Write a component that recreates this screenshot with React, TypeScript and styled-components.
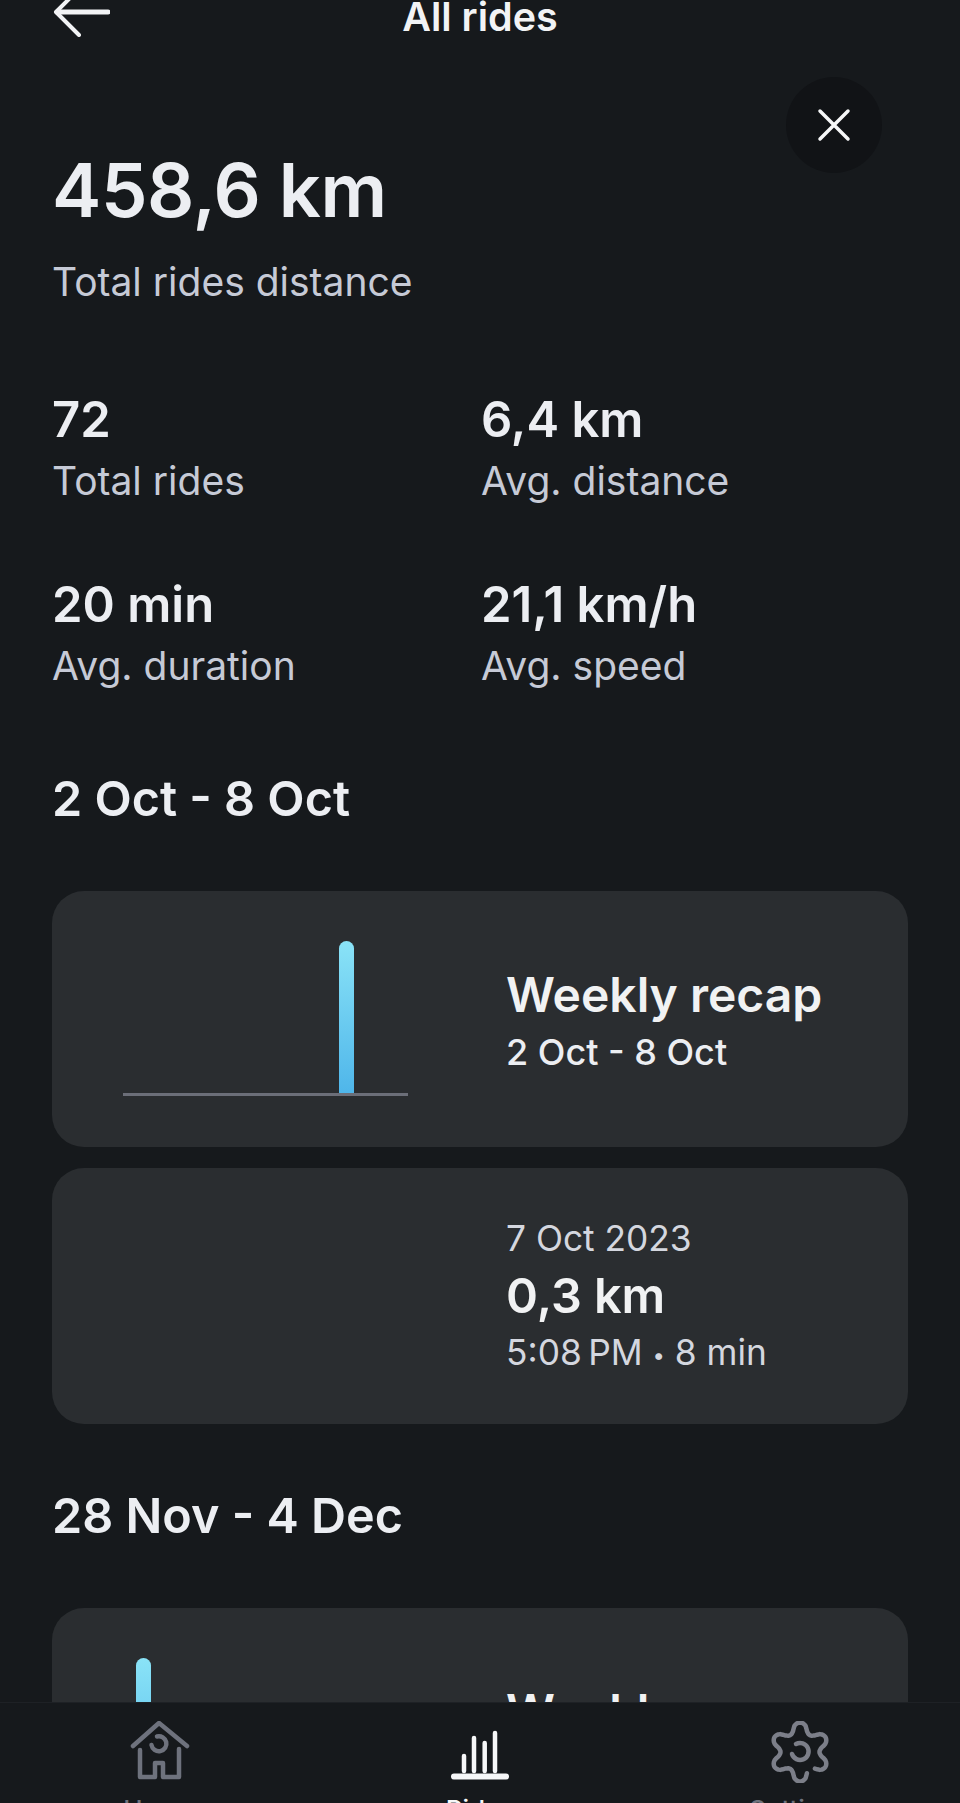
import React from "react";
import styled, { createGlobalStyle } from "styled-components";

const GlobalStyle = createGlobalStyle`
  html, body {
    margin: 0;
    padding: 0;
    background: #16191c;
    overflow: hidden;
  }
  * {
    box-sizing: border-box;
  }
`;

const Screen = styled.div`
  position: relative;
  width: 960px;
  height: 1803px;
  display: flex;
  flex-direction: column;
  overflow: hidden;
  background: #16191c;
  font-family: Inter, "Liberation Sans", sans-serif;
  color: #eceef2;
`;

const Scroll = styled.main`
  flex: 1;
  min-height: 0;
  overflow: hidden;
  padding: 0 52px;
`;

const Header = styled.header`
  height: 37px;
  display: flex;
  align-items: flex-start;
  justify-content: center;
  position: relative;
`;

const BackIcon = styled.svg`
  position: absolute;
  left: 0;
  bottom: 0;
`;

const Title = styled.h1`
  margin: -5px 0 0;
  font-size: 39.5px;
  line-height: 44px;
  font-weight: 600;
  color: #f2f3f5;
`;

const CloseButton = styled.button`
  position: absolute;
  top: 77px;
  right: 78px;
  width: 96px;
  height: 96px;
  border: none;
  border-radius: 50%;
  background: #111316;
  display: flex;
  align-items: center;
  justify-content: center;
  padding: 0;
`;

const Total = styled.div`
  margin-top: 108px;
  font-size: 74px;
  line-height: 90px;
  font-weight: 600;
  letter-spacing: -0.4px;
`;

const Label = styled.div`
  font-size: 39px;
  line-height: 58px;
  font-weight: 400;
  color: #c6cad6;
`;

const TotalLabel = styled(Label)`
  margin-top: 18px;
`;

const Stats = styled.div`
  margin-top: 77px;
  display: grid;
  grid-template-columns: 429px 1fr;
  row-gap: 63px;
`;

const Value = styled.div`
  font-size: 49px;
  line-height: 64px;
  font-weight: 600;
`;

const SectionTitle = styled.h2`
  margin: 0;
  font-size: 48.5px;
  line-height: 56px;
  font-weight: 600;
`;

const FirstSection = styled.section`
  margin-top: 76px;
`;

const NextSection = styled.section`
  margin-top: 64px;
`;

const CardList = styled.div`
  margin-top: 64px;
  display: flex;
  flex-direction: column;
  gap: 21px;
`;

const Card = styled.div`
  height: 256px;
  border-radius: 32px;
  background: #2a2d30;
  display: flex;
  align-items: center;
`;

const ChartSlot = styled.div`
  width: 454px;
  height: 100%;
  padding: 50px 0 0 71px;
`;

const Chart = styled.div`
  width: 285px;
  height: 155px;
  display: grid;
  grid-template-columns: repeat(7, 1fr);
  align-items: end;
  justify-items: center;
  border-bottom: 3px solid #6b6e78;
`;

const Bar = styled.div<{ $day: number }>`
  grid-column: ${(p) => p.$day + 1};
  width: 15px;
  height: 152px;
  border-radius: 8px 8px 0 0;
  background: linear-gradient(180deg, #8ae3f7 0%, #4fb6ea 100%);
`;

const CardText = styled.div`
  display: flex;
  flex-direction: column;
`;

const RecapText = styled(CardText)`
  padding-top: 8px;
`;

const RideText = styled(CardText)`
  padding-top: 1px;
`;

const CardTitle = styled.div`
  font-size: 48px;
  line-height: 58px;
  font-weight: 600;
  color: #f1f2f3;
`;

const CardSub = styled.div`
  font-size: 36px;
  line-height: 57px;
  font-weight: 500;
  color: #eceef2;
`;

const CardMeta = styled.div`
  font-size: 35.3px;
  line-height: 50px;
  font-weight: 400;
  color: #d4d7df;
`;

const MetaDot = styled.span`
  font-size: 22px;
  vertical-align: 2px;
`;

const CardValue = styled.div`
  font-size: 48.5px;
  line-height: 64px;
  font-weight: 600;
  color: #f1f2f3;
`;

const Nav = styled.nav`
  height: 101px;
  flex-shrink: 0;
  display: grid;
  grid-template-columns: 320px 320px 320px;
  background: #16191c;
  border-top: 1px solid #1e2125;
`;

const NavItem = styled.div<{ $active?: boolean }>`
  display: flex;
  flex-direction: column;
  align-items: center;
  color: ${(p) => (p.$active ? "#f6f7f8" : "#6e727d")};
`;

const NavIcon = styled.svg`
  display: block;
  margin-top: 18px;
  flex-shrink: 0;
`;

const NavLabel = styled.div`
  margin-top: 10px;
  font-size: 26px;
  line-height: 34px;
  font-weight: 500;
`;

// six lobes with a small opening at the lower right, like the reference icon
const gearPath = () => {
  const points: string[] = [];
  for (let deg = 72; deg <= 409; deg += 3) {
    const t = (deg * Math.PI) / 180;
    const c = Math.cos(6 * (t + Math.PI / 2));
    const r = 24.5 + 5 * Math.sign(c) * Math.pow(Math.abs(c), 0.7);
    const x = 31 + r * Math.cos(t);
    const y = 31 + r * Math.sin(t);
    points.push(`${x.toFixed(1)} ${y.toFixed(1)}`);
  }
  return "M" + points.join("L");
};

const HomeGlyph = () => (
  <NavIcon width="60" height="62" viewBox="0 0 60 62" fill="none" stroke="currentColor" strokeWidth="4.5" strokeLinecap="round" strokeLinejoin="round">
    <path d="M3 25 29 2 57 25" />
    <path d="M10 29V56H25V42H33V56H49V28" />
    <path d="M27 15.5A7.5 7.5 0 1 1 21.5 24" />
  </NavIcon>
);

const RidesGlyph = () => (
  <NavIcon width="60" height="62" viewBox="0 0 60 62" fill="none" stroke="currentColor" strokeLinecap="round">
    <g strokeWidth="4.5">
      <path d="M14 35V50" />
      <path d="M24 17V50" />
      <path d="M34.7 22V50" />
      <path d="M45 12V50" />
    </g>
    <path d="M4 55.5H56" strokeWidth="6" />
  </NavIcon>
);

const SettingsGlyph = () => (
  <NavIcon width="62" height="62" viewBox="0 0 62 62" fill="none" stroke="#7c7f89" strokeWidth="4.5" strokeLinecap="round" strokeLinejoin="round">
    <path d={gearPath()} />
    <path d="M27 23A8.5 8.5 0 1 1 23 33" />
  </NavIcon>
);

type Recap = { kind: "recap"; range: string; day: number };
type Ride = { kind: "ride"; date: string; distance: string; time: string; duration: string };

const sections: { title: string; cards: (Recap | Ride)[] }[] = [
  {
    title: "2 Oct - 8 Oct",
    cards: [
      { kind: "recap", range: "2 Oct - 8 Oct", day: 5 },
      { kind: "ride", date: "7 Oct 2023", distance: "0,3 km", time: "5:08\u202fPM", duration: "8 min" },
    ],
  },
  {
    title: "28 Nov - 4 Dec",
    cards: [{ kind: "recap", range: "28 Nov - 4 Dec", day: 0 }],
  },
];

const stats = [
  { value: "72", label: "Total rides" },
  { value: "6,4 km", label: "Avg. distance" },
  { value: "20 min", label: "Avg. duration" },
  { value: "21,1 km/h", label: "Avg. speed" },
];

const App = () => {
  return (
    <>
      <GlobalStyle />
      <Screen>
        <Scroll>
          <Header>
            <BackIcon width="58" height="37" viewBox="0 0 58 37" fill="none" stroke="#f2f3f5" strokeWidth="4" strokeLinecap="round" strokeLinejoin="round">
              <path d="M27 35 4 12 27 -11" />
              <path d="M5 12H56" strokeWidth="5" />
            </BackIcon>
            <Title>All rides</Title>
          </Header>
          <Total>458,6 km</Total>
          <TotalLabel>Total rides distance</TotalLabel>
          <Stats>
            {stats.map((s) => (
              <div key={s.label}>
                <Value>{s.value}</Value>
                <Label>{s.label}</Label>
              </div>
            ))}
          </Stats>
          {sections.map((section, i) => {
            const Wrap = i === 0 ? FirstSection : NextSection;
            return (
              <Wrap key={section.title}>
                <SectionTitle>{section.title}</SectionTitle>
                <CardList>
                  {section.cards.map((card, j) => (
                    <Card key={j}>
                      <ChartSlot>
                        {card.kind === "recap" && (
                          <Chart>
                            <Bar $day={card.day} />
                          </Chart>
                        )}
                      </ChartSlot>
                      {card.kind === "recap" ? (
                        <RecapText>
                          <CardTitle>Weekly recap</CardTitle>
                          <CardSub>{card.range}</CardSub>
                        </RecapText>
                      ) : (
                        <RideText>
                          <CardMeta>{card.date}</CardMeta>
                          <CardValue>{card.distance}</CardValue>
                          <CardMeta>
                            {card.time} <MetaDot>•</MetaDot> {card.duration}
                          </CardMeta>
                        </RideText>
                      )}
                    </Card>
                  ))}
                </CardList>
              </Wrap>
            );
          })}
        </Scroll>
        <CloseButton aria-label="Close">
          <svg width="34" height="34" viewBox="0 0 34 34" fill="none" stroke="#f6f7f8" strokeWidth="3.5" strokeLinecap="round">
            <path d="M3 3 31 31M31 3 3 31" />
          </svg>
        </CloseButton>
        <Nav>
          <NavItem>
            <HomeGlyph />
            <NavLabel>Home</NavLabel>
          </NavItem>
          <NavItem $active>
            <RidesGlyph />
            <NavLabel>Rides</NavLabel>
          </NavItem>
          <NavItem>
            <SettingsGlyph />
            <NavLabel>Settings</NavLabel>
          </NavItem>
        </Nav>
      </Screen>
    </>
  );
};

export default App;
